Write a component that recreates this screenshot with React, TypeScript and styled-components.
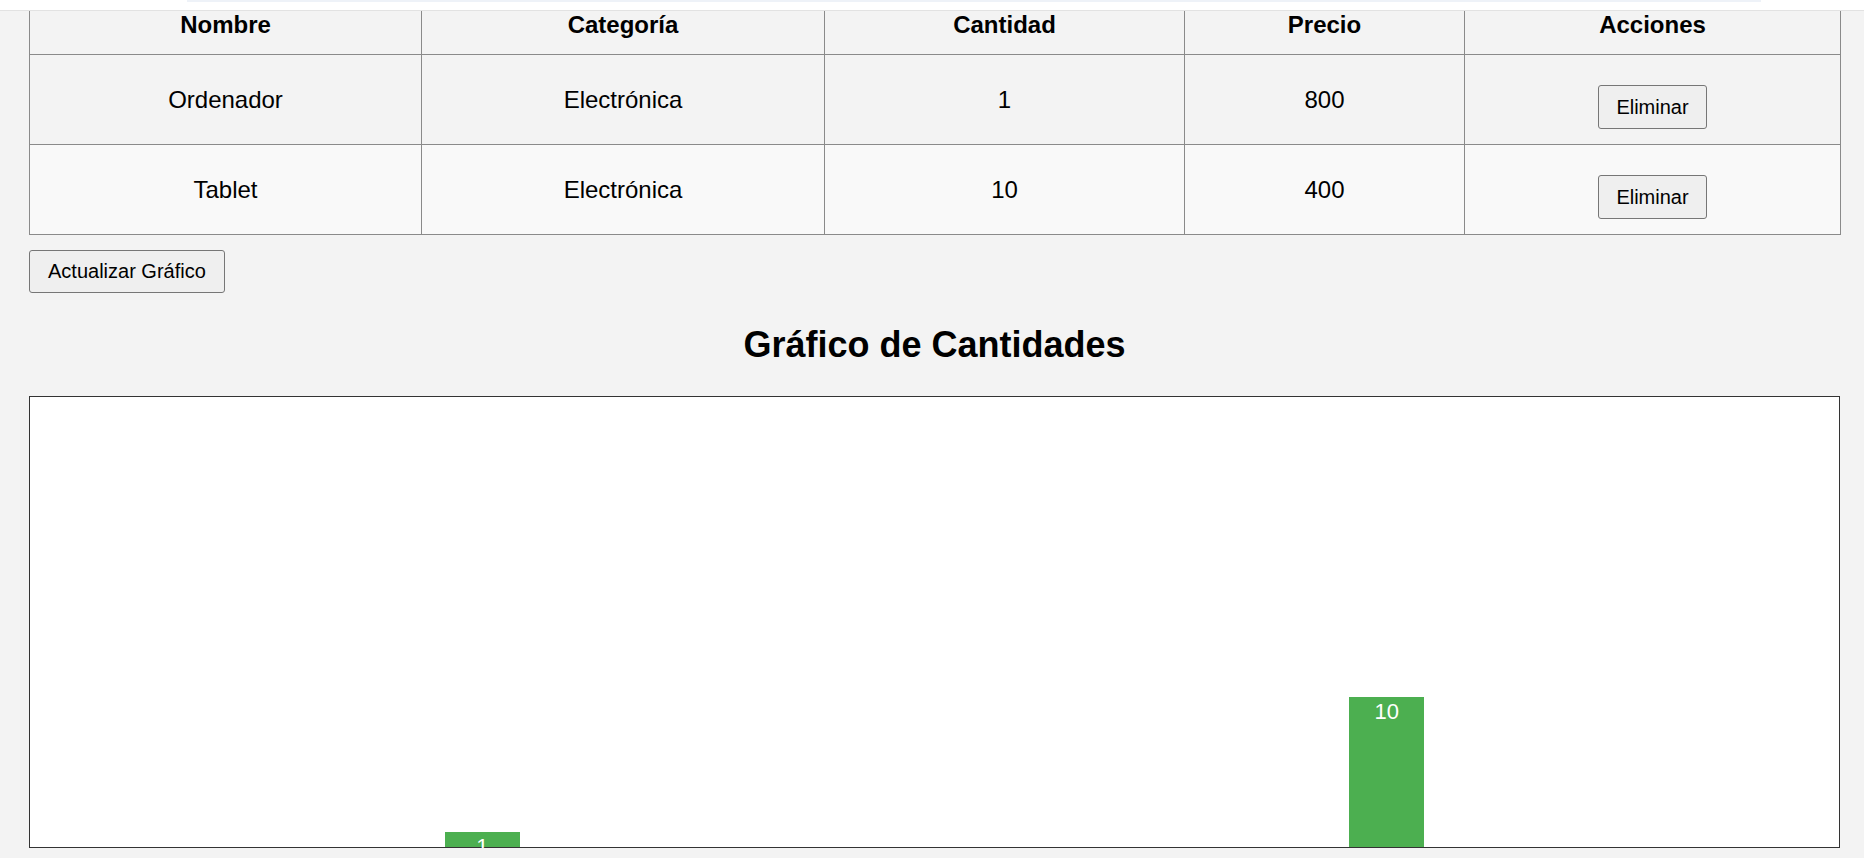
import React from "react";
import styled, { createGlobalStyle } from "styled-components";

const GlobalStyle = createGlobalStyle`
  html, body {
    margin: 0;
    padding: 0;
    background: #f3f3f3;
    font-family: "Liberation Sans", Arial, sans-serif;
    color: #000;
  }
`;

const TopStrip = styled.div`
  height: 10px;
  background: #ffffff;
  border-bottom: 1px solid #e2e2e2;
`;

const StripEdge = styled.div`
  margin-left: 187px;
  width: 1574px;
  height: 2px;
  background: #eef2f8;
`;

const Content = styled.main`
  padding: 0 24px 0 29px;
`;

const Table = styled.table`
  width: 1811px;
  table-layout: fixed;
  border-collapse: collapse;
  border-left: 1px solid #8a8a8a;
  border-right: 1px solid #8a8a8a;
  border-bottom: 1px solid #8a8a8a;
`;

const HeadCell = styled.th`
  height: 43px;
  padding: 0 0 16px;
  box-sizing: border-box;
  background: #f3f3f3;
  border-left: 1px solid #8a8a8a;
  border-right: 1px solid #8a8a8a;
  border-bottom: 1px solid #8a8a8a;
  font-size: 24px;
  line-height: 27px;
  font-weight: 700;
  text-align: center;
  vertical-align: top;
`;

const Row = styled.tr<{ $alt: boolean }>`
  background: ${(p) => (p.$alt ? "#f9f9f9" : "#f3f3f3")};
`;

const Cell = styled.td`
  height: 89px;
  padding: 0;
  border: 1px solid #8a8a8a;
  font-size: 24px;
  line-height: 27px;
  text-align: center;
  vertical-align: middle;
`;

const BaseButton = styled.button`
  font-family: "Liberation Sans", Arial, sans-serif;
  font-size: 20px;
  color: #000;
  background: #efefef;
  border: 1px solid #767676;
  border-radius: 3px;
  cursor: pointer;
`;

const DeleteButton = styled(BaseButton)`
  margin-top: 15px;
  padding: 10px 17px;
  line-height: 22px;
`;

const UpdateButton = styled(BaseButton)`
  display: block;
  margin-top: 15px;
  padding: 9px 18px;
  line-height: 23px;
`;

const Title = styled.h2`
  margin: 31px 0;
  font-size: 36px;
  line-height: 41px;
  font-weight: 700;
  text-align: center;
`;

const Chart = styled.div`
  width: 1811px;
  height: 452px;
  box-sizing: border-box;
  background: #ffffff;
  border: 1px solid #333333;
  display: flex;
  justify-content: space-around;
  align-items: flex-end;
`;

const Bar = styled.div`
  width: 75px;
  background: #4caf50;
  color: #ffffff;
  font-size: 22px;
  line-height: 29px;
  text-align: center;
`;

const products = [
  { name: "Ordenador", category: "Electrónica", qty: 1, price: 800 },
  { name: "Tablet", category: "Electrónica", qty: 10, price: 400 },
];

const widths = [392, 403, 360, 280, 376];
const headers = ["Nombre", "Categoría", "Cantidad", "Precio", "Acciones"];

export default function App() {
  return (
    <>
      <GlobalStyle />
      <TopStrip>
        <StripEdge />
      </TopStrip>
      <Content>
        <Table>
          <colgroup>
            {widths.map((w, i) => (
              <col key={i} style={{ width: w }} />
            ))}
          </colgroup>
          <thead>
            <tr>
              {headers.map((h) => (
                <HeadCell key={h}>{h}</HeadCell>
              ))}
            </tr>
          </thead>
          <tbody>
            {products.map((p, i) => (
              <Row key={p.name} $alt={i % 2 === 1}>
                <Cell>{p.name}</Cell>
                <Cell>{p.category}</Cell>
                <Cell>{p.qty}</Cell>
                <Cell>{p.price}</Cell>
                <Cell>
                  <DeleteButton>Eliminar</DeleteButton>
                </Cell>
              </Row>
            ))}
          </tbody>
        </Table>
        <UpdateButton>Actualizar Gráfico</UpdateButton>
        <Title>Gráfico de Cantidades</Title>
        <Chart>
          {products.map((p) => (
            <Bar key={p.name} style={{ height: p.qty * 15 }}>
              {p.qty}
            </Bar>
          ))}
        </Chart>
      </Content>
    </>
  );
}
